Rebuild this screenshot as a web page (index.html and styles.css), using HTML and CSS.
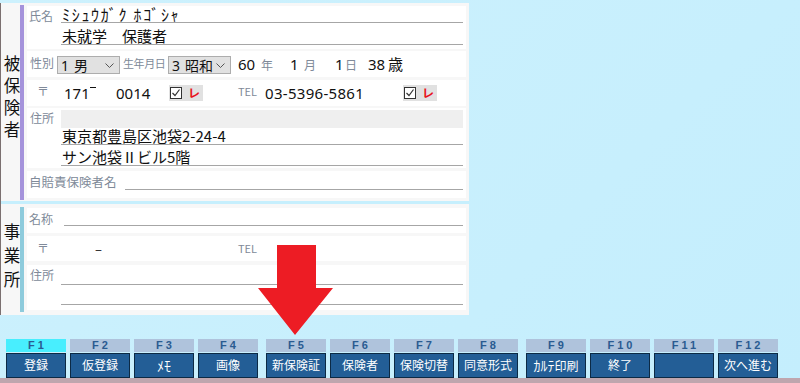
FILE: index.html
```html
<!DOCTYPE html>
<html lang="ja">

<head>
  <meta charset="UTF-8" />
  <meta name="viewport" content="width=device-width, initial-scale=1" />
  <title>患者登録 - 保険者情報</title>
  <link rel="stylesheet" href="styles.css">
</head>

<body>

  <div class="panel">

    <!-- 被保険者 -->
    <div class="section section-insured">
      <div class="side side-insured"><span>被保険者</span></div>
      <div class="bar bar-insured"></div>
      <div class="rows">

        <div class="row row-name">
          <div class="lbl">氏名</div>
          <div class="field">
            <div class="ln ln-kana">ﾐｼｭｳｶﾞｸ ﾎｺﾞｼｬ</div>
            <div class="ln ln-kanji">未就学　保護者</div>
          </div>
        </div>

        <div class="row row-birth">
          <div class="lbl lbl-sex">性別</div>
          <div class="select"><span class="opt"><b>1</b>男</span><svg class="chev" width="9" height="5" viewBox="0 0 9 5"><polyline points="0.5,0.5 4.5,4.5 8.5,0.5" fill="none" stroke="#555" stroke-width="1" /></svg></div>
          <div class="lbl lbl-birth">生年月日</div>
          <div class="select"><span class="opt"><b>3</b>昭和</span><svg class="chev" width="9" height="5" viewBox="0 0 9 5"><polyline points="0.5,0.5 4.5,4.5 8.5,0.5" fill="none" stroke="#555" stroke-width="1" /></svg></div>
          <span class="num num-year">60</span><span class="unit unit-year">年</span>
          <span class="num num-month">1</span><span class="unit unit-month">月</span>
          <span class="num num-day">1</span><span class="unit unit-day">日</span>
          <span class="num num-age">38</span><span class="kanji-big">歳</span>
        </div>

        <div class="row row-zip">
          <div class="lbl lbl-zip">〒</div>
          <span class="num zip1">171</span>
          <span class="zip-dash"><i></i></span>
          <span class="num zip2">0014</span>
          <div class="chk">
            <span class="box"><svg width="10" height="10" viewBox="0 0 10 10"><polyline points="1.5,5 4,7.5 8.5,1.5" fill="none" stroke="#333" stroke-width="1.2" /></svg></span>
            <span class="mark">レ</span>
          </div>
          <div class="lbl lbl-tel">TEL</div>
          <span class="num tel">03-5396-5861</span>
          <div class="chk">
            <span class="box"><svg width="10" height="10" viewBox="0 0 10 10"><polyline points="1.5,5 4,7.5 8.5,1.5" fill="none" stroke="#333" stroke-width="1.2" /></svg></span>
            <span class="mark">レ</span>
          </div>
        </div>

        <div class="row row-addr">
          <div class="lbl">住所</div>
          <div class="field">
            <div class="addr-input"></div>
            <div class="ln ln-addr1">東京都豊島区池袋2-24-4</div>
            <div class="ln ln-addr2">サン池袋Ⅱビル5階</div>
          </div>
        </div>

        <div class="row row-jibai">
          <div class="lbl lbl-jibai">自賠責保険者名</div>
          <div class="ln ln-jibai"></div>
        </div>

      </div>
    </div>

    <div class="sep"></div>

    <!-- 事業所 -->
    <div class="section section-office">
      <div class="side side-office"><span>事業所</span></div>
      <div class="bar bar-office"></div>
      <div class="rows">

        <div class="row row-oname">
          <div class="lbl lbl-oname">名称</div>
          <div class="ln ln-oname"></div>
        </div>

        <div class="row row-ozip">
          <div class="lbl lbl-zip">〒</div>
          <span class="odash">–</span>
          <div class="lbl lbl-otel">TEL</div>
        </div>

        <div class="row row-oaddr">
          <div class="lbl">住所</div>
          <div class="field">
            <div class="ln ln-oaddr"></div>
            <div class="ln ln-oaddr"></div>
          </div>
        </div>

      </div>
    </div>

  </div>

  <!-- 矢印 -->
  <svg class="arrow" width="76" height="91" viewBox="0 0 76 91">
    <polygon points="19,0 58,0 58,43 75,43 37,90 0,43 19,43" fill="#ed1c24" />
  </svg>

  <!-- ファンクションキー -->
  <div class="fkeys">
    <div class="fgroup">
      <div class="fkey active"><div class="fname">F1</div><div class="fbtn">登録</div></div>
      <div class="fkey"><div class="fname">F2</div><div class="fbtn">仮登録</div></div>
      <div class="fkey"><div class="fname">F3</div><div class="fbtn"><span class="hw">ﾒﾓ</span></div></div>
      <div class="fkey"><div class="fname">F4</div><div class="fbtn">画像</div></div>
    </div>
    <div class="fgroup">
      <div class="fkey"><div class="fname">F5</div><div class="fbtn">新保険証</div></div>
      <div class="fkey"><div class="fname">F6</div><div class="fbtn">保険者</div></div>
      <div class="fkey"><div class="fname">F7</div><div class="fbtn">保険切替</div></div>
      <div class="fkey"><div class="fname">F8</div><div class="fbtn">同意形式</div></div>
    </div>
    <div class="fgroup">
      <div class="fkey"><div class="fname">F9</div><div class="fbtn"><span class="hw">ｶﾙﾃ</span>印刷</div></div>
      <div class="fkey"><div class="fname">F10</div><div class="fbtn">終了</div></div>
      <div class="fkey"><div class="fname">F11</div><div class="fbtn"></div></div>
      <div class="fkey"><div class="fname">F12</div><div class="fbtn">次へ進む</div></div>
    </div>
  </div>

  <div class="taskstrip"></div>

</body>

</html>
```

FILE: styles.css
```css
* {
  margin: 0;
  padding: 0;
  box-sizing: border-box;
}

body {
  width: 800px;
  height: 383px;
  overflow: hidden;
  position: relative;
  background: linear-gradient(135deg, #cdf1fd 0%, #c4eefd 100%);
  font-family: "Noto Sans CJK JP", "Noto Sans", sans-serif;
  color: #111;
}

.panel {
  width: 469px;
  margin-top: 3px;
  padding: 2px 0 3px;
  background-color: #f7f7f7;
  border-left: 1px solid #7b7070;
}

.section {
  display: flex;
}

.section-insured {
  height: 195px;
}

.section-office {
  height: 105px;
}

.side {
  width: 19px;
  padding-left: 3px;
  display: flex;
  align-items: center;
  justify-content: center;
}

.side span {
  writing-mode: vertical-rl;
  font-size: 16.5px;
  line-height: 16px;
  color: #111;
}

.side-insured {
  padding-bottom: 8px;
}

.side-insured span {
  letter-spacing: 5.5px;
}

.side-office {
  padding-bottom: 2px;
}

.side-office span {
  letter-spacing: 7.5px;
}

.bar {
  width: 4px;
}

.bar-insured {
  background-color: #a593db;
}

.bar-office {
  background-color: #8ecbdc;
}

.rows {
  flex: 1;
  padding: 1px 3px 2px 3px;
  display: flex;
  flex-direction: column;
}

.row {
  background-color: #fff;
  display: flex;
}

.lbl {
  width: 34px;
  padding-left: 2px;
  font-size: 12px;
  line-height: 14px;
  color: #808a99;
  flex-shrink: 0;
}

.field {
  flex: 1;
  margin-right: 3px;
}

.ln {
  border-bottom: 1px solid #a6a6a6;
  padding-left: 1px;
  white-space: nowrap;
}

/* 氏名 */
.row-name {
  height: 43px;
}

.row-name .lbl {
  padding-top: 3px;
}

.ln-kana {
  height: 17px;
  font-size: 16px;
  line-height: 16px;
  letter-spacing: 1.7px;
}

.ln-kanji {
  height: 22px;
  padding-top: 4px;
  font-size: 15px;
  line-height: 17px;
}

/* 性別・生年月日 */
.row-birth {
  height: 26px;
  margin-top: 2px;
  align-items: center;
}

.lbl-sex {
  width: 30px;
  padding-left: 3px;
  margin-top: -3px;
}

.lbl-birth {
  width: 48px;
  padding-left: 3px;
  font-size: 11px;
  letter-spacing: -0.4px;
  margin-top: -3px;
}

.select {
  width: 63px;
  height: 18px;
  background-color: #e1e1e1;
  border: 1px solid #adadad;
  display: flex;
  align-items: center;
  justify-content: space-between;
  padding: 0 5px 0 3px;
  font-size: 14px;
  line-height: 16px;
  margin-top: 2px;
}

.opt b {
  font-weight: normal;
  font-family: "Noto Sans", sans-serif;
  margin-right: 5px;
}

.num {
  font-family: "Noto Sans", "Noto Sans CJK JP", sans-serif;
  font-size: 15px;
  line-height: 18px;
  color: #111;
}

.kanji-big {
  font-size: 15px;
  line-height: 18px;
}

.unit {
  font-size: 12px;
  color: #808a99;
}

.num-year {
  width: 23px;
  margin-left: 7px;
}

.unit-year {
  width: 29px;
}

.num-month {
  width: 14px;
}

.unit-month {
  width: 31px;
}

.num-day {
  width: 10px;
}

.unit-day {
  width: 23px;
}

.num-age {
  width: 20px;
}

/* 郵便番号・TEL */
.row-zip {
  height: 26px;
  margin-top: 3px;
  align-items: center;
}

.lbl-zip {
  width: 37px;
  padding-left: 10px;
  margin-top: -5px;
}

.zip1 {
  width: 26px;
}

.zip-dash {
  width: 26px;
  height: 18px;
}

.zip-dash i {
  display: block;
  width: 6px;
  height: 1px;
  margin-top: 3px;
  background-color: #111;
}

.zip2 {
  width: 53px;
}

.chk {
  width: 34px;
  height: 16px;
  background-color: #e1e1e1;
  display: flex;
  align-items: center;
}

.box {
  width: 12px;
  height: 12px;
  border: 1px solid #333;
  background-color: #fff;
  display: flex;
  align-items: center;
  justify-content: center;
  margin-left: 1px;
}

.mark {
  color: #e8141c;
  font-weight: bold;
  font-size: 12px;
  line-height: 14px;
  margin-left: 6px;
}

.lbl-tel {
  width: 27px;
  margin-left: 35px;
  padding-left: 0;
  font-size: 11px;
  margin-top: -5px;
}

.tel {
  width: 138px;
  letter-spacing: 0.3px;
}

/* 住所 */
.row-addr {
  height: 60px;
  margin-top: 2px;
}

.row-addr .lbl,
.row-oaddr .lbl {
  padding-left: 3px;
  padding-top: 3px;
}

.addr-input {
  height: 18px;
  margin-top: 2px;
  background-color: #efefef;
}

.ln-addr1 {
  height: 17px;
  font-size: 15px;
  line-height: 16px;
}

.ln-addr2 {
  height: 21px;
  padding-top: 3px;
  font-size: 15px;
  line-height: 17px;
}

/* 自賠責 */
.row-jibai {
  height: 27px;
  margin-top: 3px;
}

.lbl-jibai {
  width: 98px;
  padding-top: 4px;
  font-size: 12.5px;
}

.ln-jibai {
  flex: 1;
  height: 19px;
  margin-right: 3px;
}

.sep {
  height: 3px;
  margin: 1px 0 3px;
  background-color: #c6effd;
}

/* 事業所 */
.row-oname {
  height: 25px;
}

.lbl-oname {
  width: 37px;
  padding-top: 4px;
}

.ln-oname {
  flex: 1;
  height: 18px;
  margin-right: 3px;
}

.row-ozip {
  height: 26px;
  margin-top: 3px;
  align-items: center;
}

.row-ozip .lbl-zip {
  margin-top: -2px;
}

.odash {
  width: 174px;
  padding-left: 31px;
  font-size: 13px;
  line-height: 16px;
}

.lbl-otel {
  width: 30px;
  font-size: 11px;
  padding-left: 0;
  margin-top: -2px;
}

.row-oaddr {
  height: 45px;
  margin-top: 4px;
}

.ln-oaddr {
  height: 20px;
}

/* 矢印 */
.arrow {
  position: absolute;
  left: 258px;
  top: 245px;
}

/* ファンクションキー */
.fkeys {
  display: flex;
  gap: 8px;
  margin-top: 24px;
  padding-left: 6px;
}

.fgroup {
  display: flex;
  gap: 4px;
}

.fkey {
  width: 60px;
}

.fname {
  height: 13px;
  background-color: #afc3dc;
  color: #2a5b91;
  font-family: "Liberation Sans", Arial, sans-serif;
  font-weight: bold;
  font-size: 11px;
  line-height: 13px;
  letter-spacing: 3px;
  text-align: center;
  padding-left: 3px;
}

.fkey.active .fname {
  background-color: #48eefe;
}

.fbtn {
  height: 25px;
  margin-top: 1px;
  background-color: #235e96;
  border: 1px solid #0c2a45;
  color: #fff;
  font-size: 12px;
  line-height: 22px;
  text-align: center;
  white-space: nowrap;
}

.hw {
  font-size: 14px;
}

.taskstrip {
  position: absolute;
  left: 0;
  bottom: 0;
  width: 800px;
  height: 5px;
  background-color: #bfa6ae;
}
```
